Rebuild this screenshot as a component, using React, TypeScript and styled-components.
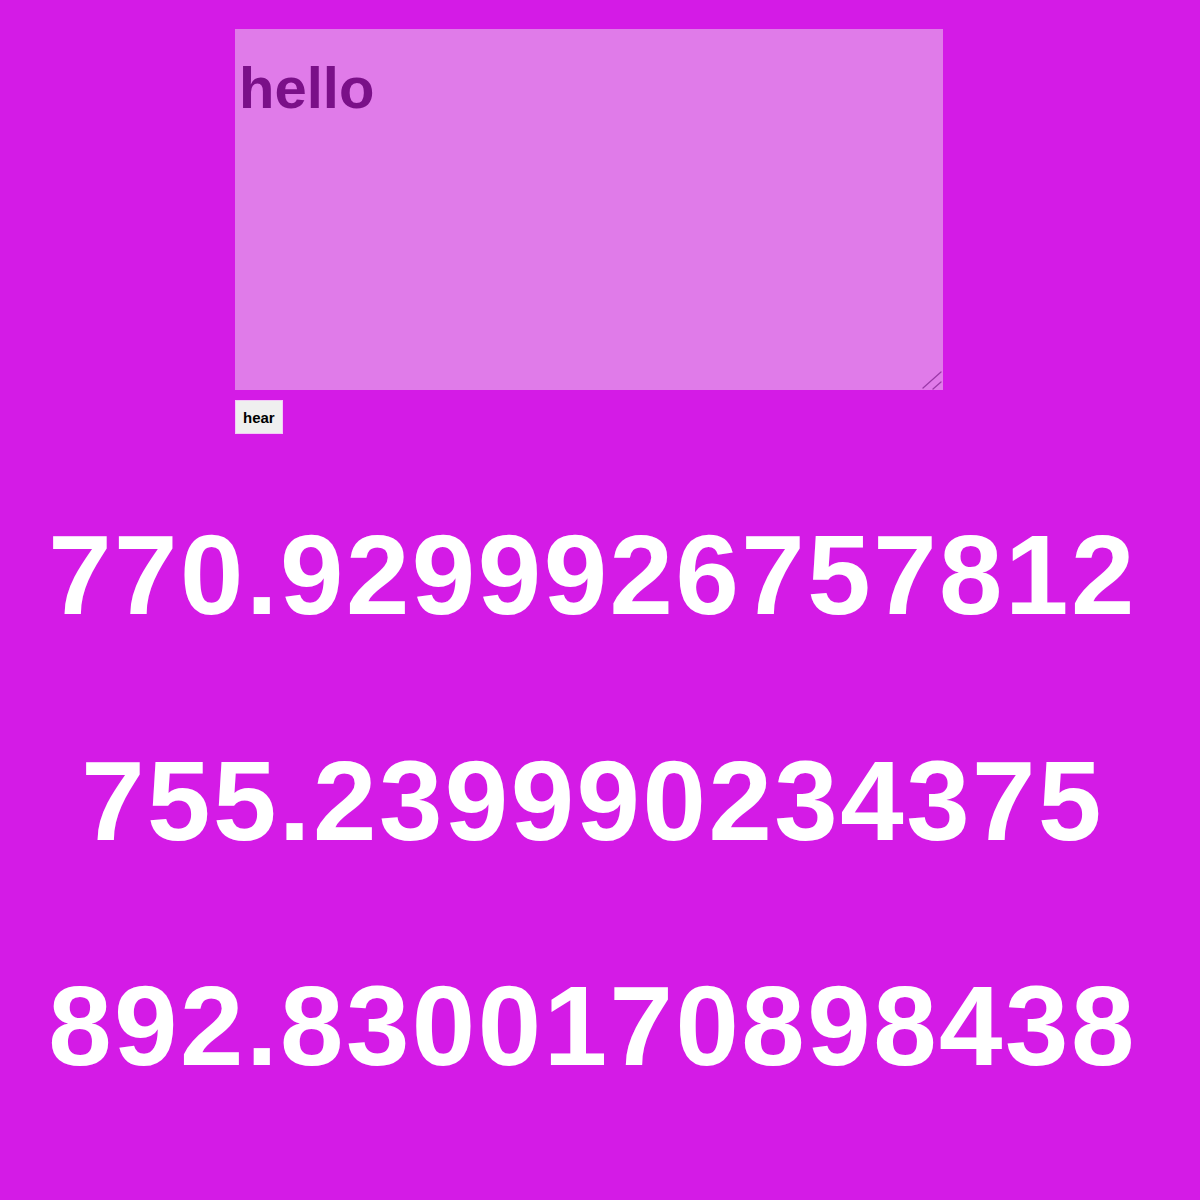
import React from "react";
import styled, { createGlobalStyle } from "styled-components";

const Global = createGlobalStyle`
  html, body { margin: 0; padding: 0; background: #d41be6; }
  body { font-family: "Liberation Sans", Arial, sans-serif; }
`;

const Page = styled.div`
  min-height: 1200px;
  background: #d41be6;
  display: flex;
  flex-direction: column;
`;

const Form = styled.div`
  display: flex;
  flex-direction: column;
  align-items: flex-start;
  gap: 10px;
  padding: 29px 0 0 235px;
`;

const AreaWrap = styled.div`
  position: relative;
  width: 708px;
  height: 361px;
`;

const Area = styled.textarea`
  box-sizing: border-box;
  display: block;
  width: 100%;
  height: 100%;
  margin: 0;
  padding: 26px 4px;
  border: none;
  outline: none;
  background: #e07be9;
  color: #7a1088;
  font-family: "Liberation Sans", Arial, sans-serif;
  font-weight: bold;
  font-size: 58px;
  line-height: 1.15;
  resize: none;
`;

const Grip = styled.svg`
  position: absolute;
  right: 0;
  bottom: 0;
  width: 22px;
  height: 20px;
  pointer-events: none;
`;

const Button = styled.button`
  box-sizing: border-box;
  height: 34px;
  padding: 0 7px;
  margin: 0;
  border: 1px solid #f4c8f8;
  background: #efefef;
  color: #000;
  font-family: "Liberation Sans", Arial, sans-serif;
  font-weight: bold;
  font-size: 15px;
`;

const Numbers = styled.div`
  width: 1185px;
  display: flex;
  flex-direction: column;
  align-items: center;
  gap: 93.5px;
  padding-top: 75px;
`;

const Num = styled.h2`
  margin: 0;
  color: #fff;
  font-family: "Liberation Sans", Arial, sans-serif;
  font-weight: bold;
  font-size: 114px;
  letter-spacing: 2.5px;
  line-height: 132px;
`;

const values = ["770.9299926757812", "755.239990234375", "892.8300170898438"];

export default function App() {
  return (
    <Page>
      <Global />
      <Form>
        <AreaWrap>
          <Area defaultValue="hello" />
          <Grip viewBox="0 0 22 20">
            <line x1="2" y1="18" x2="20" y2="2" stroke="#9a3aa8" strokeWidth="1.3" strokeLinecap="round" />
            <line x1="12" y1="19" x2="20" y2="12" stroke="#9a3aa8" strokeWidth="1.3" strokeLinecap="round" />
          </Grip>
        </AreaWrap>
        <Button>hear</Button>
      </Form>
      <Numbers>
        {values.map((v) => (
          <Num key={v}>{v}</Num>
        ))}
      </Numbers>
    </Page>
  );
}
